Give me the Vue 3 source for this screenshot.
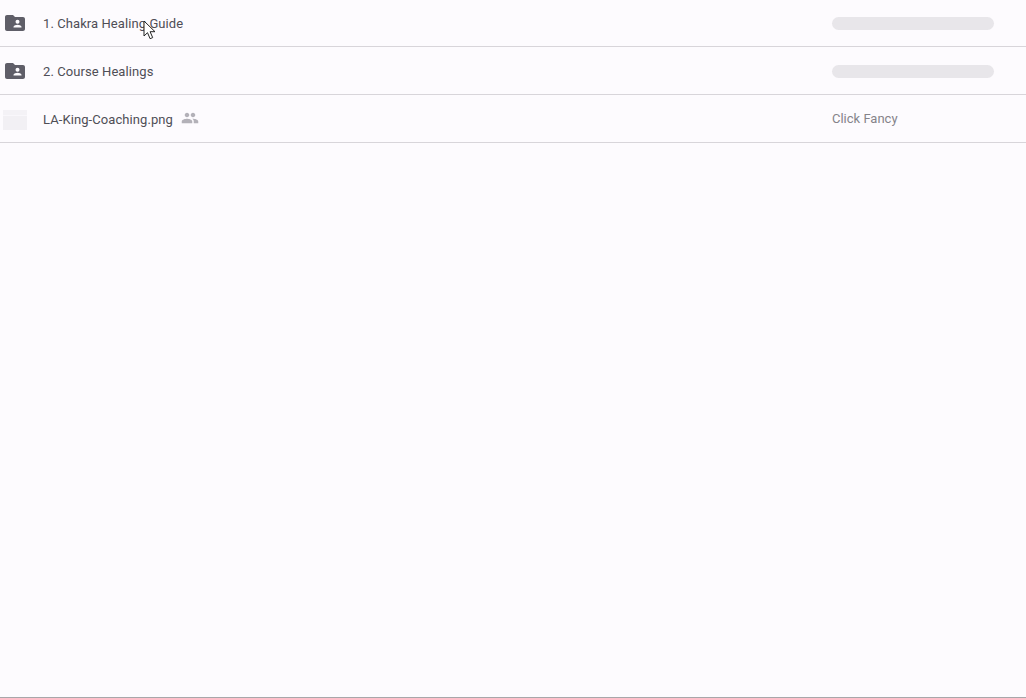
<script setup>
const rows = [
  { id: 1, name: '1. Chakra Healing Guide', type: 'folder', owner: null },
  { id: 2, name: '2. Course Healings', type: 'folder', owner: null },
  { id: 3, name: 'LA-King-Coaching.png', type: 'file', owner: 'Click Fancy' }
]
</script>

<template>
  <div class="page">
    <div class="list">
      <div v-for="row in rows" :key="row.id" class="row">
        <div class="icon-cell">
          <svg v-if="row.type === 'folder'" class="folder" width="24" height="24" viewBox="0 0 24 24">
            <path fill="#5f5e68" d="M20 6h-8l-2-2H4c-1.100 0-2 .9-2 2v12c0 1.100.9 2 2 2h16c1.100 0 2-.9 2-2V8c0-1.100-.9-2-2-2z" />
            <circle cx="14.500" cy="10.700" r="2" fill="#fdfbfe" />
            <path fill="#fdfbfe" d="M10.500 16.500v-.800c0-1.300 2.700-2 4-2s4 .700 4 2v.800z" />
          </svg>
          <div v-else class="thumb"><div class="thumb-top"></div></div>
        </div>
        <div class="name">{{ row.name }}</div>
        <svg v-if="row.type === 'file'" class="shared" width="18" height="18" viewBox="0 0 24 24">
          <path fill="#b3b1b8" d="M16 11c1.660 0 2.990-1.340 2.990-3S17.660 5 16 5s-3 1.340-3 3 1.340 3 3 3zm-8 0c1.660 0 2.990-1.340 2.990-3S9.660 5 8 5 5 6.340 5 8s1.340 3 3 3zm0 2c-2.330 0-7 1.170-7 3.500V19h14v-2.500c0-2.330-4.670-3.500-7-3.500zm8 0c-.290 0-.620.020-.970.050 1.160.840 1.970 1.970 1.970 3.450V19h6v-2.500c0-2.330-4.670-3.500-7-3.500z" />
        </svg>
        <div class="owner">
          <span v-if="row.owner" class="owner-name">{{ row.owner }}</span>
          <div v-else class="skeleton"></div>
        </div>
      </div>
    </div>
    <svg class="cursor" width="14" height="21" viewBox="0 0 14 21">
      <path fill="#fff" stroke="#222" stroke-width="1" d="M1 1v15l3.500-3.300 2.600 6 2.600-1.100-2.600-5.900h4.900z" />
    </svg>
  </div>
</template>

<style scoped>
.page {
  position: relative;
  box-sizing: border-box;
  height: 698px;
  background: #fdfbfe;
  border-bottom: 1px solid #a8a7aa;
  font-family: Roboto, "Liberation Sans", sans-serif;
  overflow: hidden;
}
.row {
  position: relative;
  display: flex;
  align-items: center;
  box-sizing: border-box;
  height: 47px;
  margin-bottom: 1px;
  border-bottom: 1px solid #d8d5da;
}
.icon-cell {
  flex: none;
  width: 43px;
  display: flex;
  align-items: center;
  padding-left: 3px;
  box-sizing: border-box;
}
.folder { display: block; }
.thumb {
  width: 24px;
  height: 20px;
  background: #f2f0f4;
  margin-top: 1px;
}
.thumb-top {
  height: 5px;
  border-bottom: 1px solid #f9f7fb;
  background: #f4f2f6;
}
.name {
  font-size: 13px;
  color: #4f4e56;
  letter-spacing: 0.08px;
  white-space: nowrap;
}
.shared {
  margin-left: 8px;
  margin-top: -2px;
}
.owner {
  position: absolute;
  left: 832px;
  top: 0;
  bottom: 0;
  display: flex;
  align-items: center;
  font-size: 13px;
  color: #85838a;
}
.owner-name {
  display: block;
  margin-top: -1px;
}
.skeleton {
  width: 162px;
  height: 13px;
  margin-top: 1px;
  border-radius: 7px;
  background: #e8e6ea;
}
.cursor {
  position: absolute;
  left: 143px;
  top: 20px;
}
</style>
